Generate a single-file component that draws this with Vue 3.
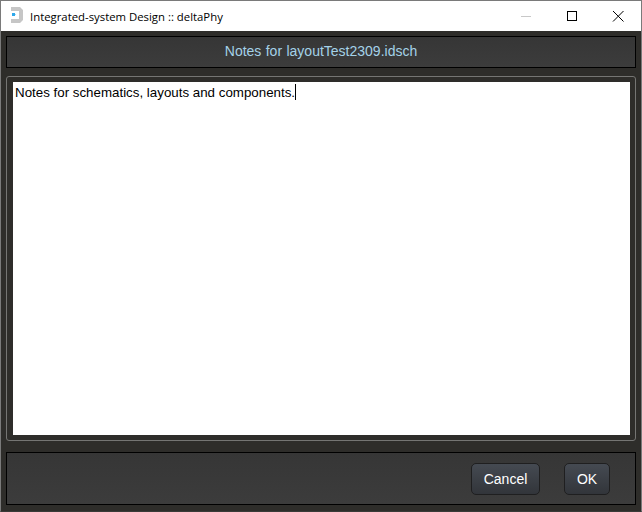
<script setup>
const title = 'Integrated-system Design :: deltaPhy'
const fileName = 'layoutTest2309.idsch'
const notes = 'Notes for schematics, layouts and components.'
</script>

<template>
  <div class="window">
    <div class="titlebar">
      <svg class="app-icon" width="16" height="18" viewBox="0 0 16 18">
        <path d="M1 0H10L13 3V13L10 16H1V12H9V4H1Z" fill="#c6c6c6" />
        <rect x="2" y="6" width="3" height="3" fill="#2fa8ea" />
        <rect x="5" y="7" width="1" height="1" fill="#a8dcf5" />
      </svg>
      <span class="title">{{ title }}</span>
      <div class="controls">
        <svg width="46" height="30" viewBox="0 0 46 30">
          <rect x="18" y="15" width="10" height="1" fill="#c8c8c8" />
        </svg>
        <svg width="46" height="30" viewBox="0 0 46 30">
          <rect x="18.5" y="10.5" width="9" height="9" fill="none" stroke="#000" />
        </svg>
        <svg width="46" height="30" viewBox="0 0 46 30">
          <path d="M18 10L28.5 20.5M28.5 10L18 20.5" stroke="#000" fill="none" />
        </svg>
      </div>
    </div>
    <div class="body">
      <div class="panel header"><span class="file-title">Notes for {{ fileName }}</span></div>
      <div class="group">
        <div class="editor">{{ notes }}<span class="caret"></span></div>
      </div>
      <div class="panel footer">
        <button class="btn cancel">Cancel</button>
        <button class="btn ok">OK</button>
      </div>
    </div>
  </div>
</template>

<style>
html, body {
  margin: 0;
  background: #2e2d2a;
}
</style>

<style scoped>
.window {
  width: 642px;
  height: 512px;
  box-sizing: border-box;
  display: flex;
  flex-direction: column;
  border: 1px solid #7a7a7a;
  border-bottom-color: #3a3a38;
  overflow: hidden;
  background: #2e2d2a;
  font-family: "Liberation Sans", Arial, sans-serif;
}

.titlebar {
  height: 30px;
  flex: none;
  display: flex;
  align-items: center;
  background: #fff;
  padding-left: 9px;
}

.app-icon {
  flex: none;
  margin-right: 4px;
}

.title {
  font-family: "Open Sans", sans-serif;
  font-size: 11.35px;
  color: #000;
  white-space: nowrap;
}

.controls {
  margin-left: auto;
  display: flex;
}

.controls svg {
  display: block;
}

.body {
  flex: 1;
  display: flex;
  flex-direction: column;
  padding: 5px 5px 6px;
  min-height: 0;
}

.panel {
  box-sizing: border-box;
  border: 1px solid #000;
  background: linear-gradient(#363636, #3c3c3c);
  flex: none;
}

.header {
  height: 32px;
  display: flex;
  align-items: center;
  justify-content: center;
  padding-bottom: 2px;
  color: #a4d2e8;
  font-size: 14px;
  word-spacing: 0.5px;
}

.group {
  flex: 1;
  min-height: 0;
  margin: 8px 0 11px;
  padding: 5px 5px 5px 6px;
  border: 1px solid #757573;
  border-radius: 3px;
  box-sizing: border-box;
  display: flex;
}

.editor {
  flex: 1;
  background: #fff;
  color: #000;
  font-size: 13.33px;
  line-height: 17px;
  padding: 2px;
}

.caret {
  display: inline-block;
  width: 1px;
  height: 16px;
  background: #000;
  vertical-align: -3px;
}

.footer {
  height: 53px;
  display: flex;
  align-items: center;
  justify-content: flex-end;
  gap: 24px;
  padding-right: 25px;
}

.btn {
  height: 32px;
  box-sizing: border-box;
  border: 1px solid #1f1f20;
  border-radius: 5px;
  background: linear-gradient(#454a52, #32353a);
  color: #fff;
  font-family: "Liberation Sans", Arial, sans-serif;
  font-size: 14px;
  padding: 0;
}

.cancel {
  width: 69px;
}

.ok {
  width: 46px;
}
</style>
